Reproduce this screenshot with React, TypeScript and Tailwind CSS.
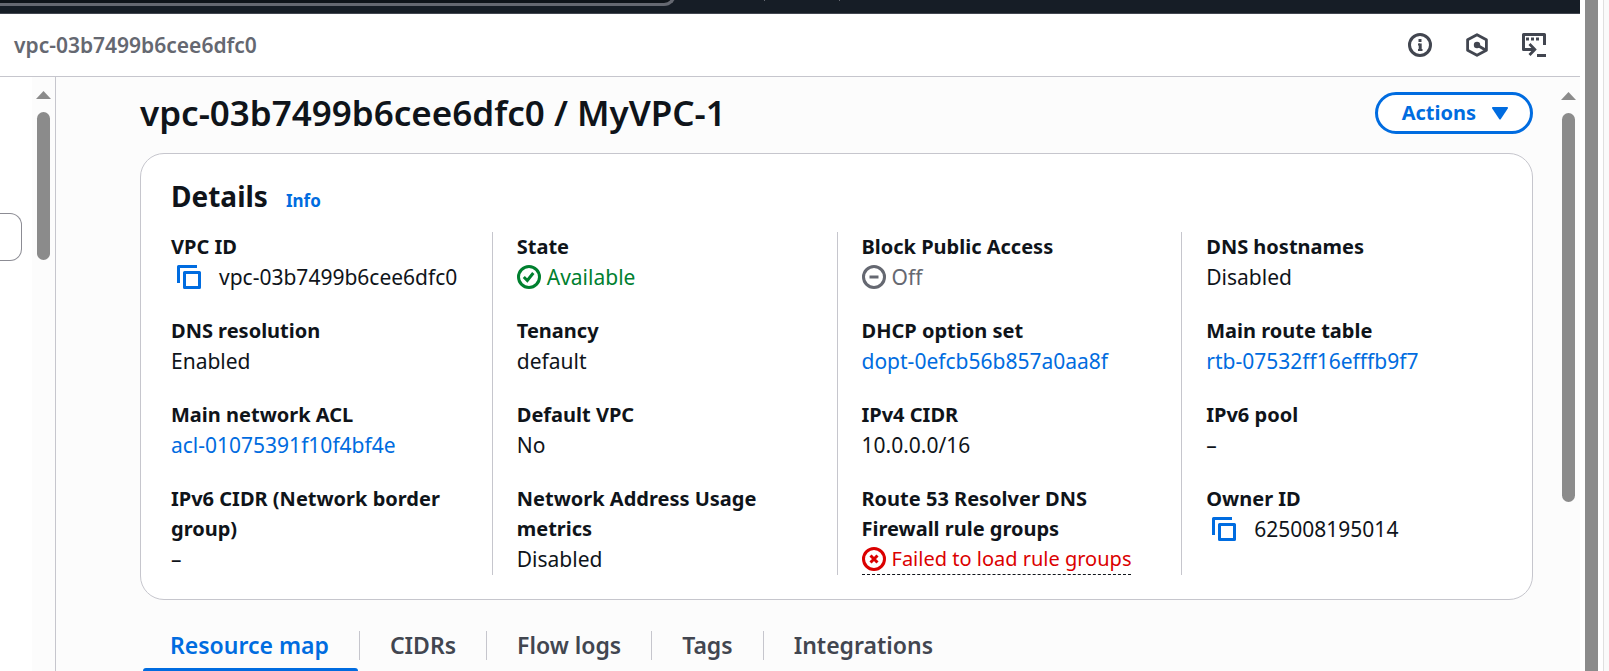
import type { ReactNode } from "react";

function InfoIcon() {
  return (
    <svg viewBox="0 0 24 24" className="size-6" fill="none" stroke="#424650" strokeWidth="3" aria-hidden="true">
      <circle cx="12" cy="12" r="10.500" />
      <path d="M12 6v3" />
      <path d="M12.200 10.500V18" />
      <path d="M10 11.500h2M10 17h4.500" strokeWidth="2" />
    </svg>
  );
}

function HexIcon() {
  return (
    <svg viewBox="0 0 24 24" className="size-6" fill="none" stroke="#424650" strokeWidth="2.800" aria-hidden="true">
      <path d="M21.400 17.300V6.800L12 1.700L2.600 6.800v10.500L12 22.300z" strokeLinejoin="round" />
      <path d="M12 12l8.500 5" />
      <circle cx="12" cy="12" r="3.200" fill="#424650" stroke="none" />
    </svg>
  );
}

function ShellIcon() {
  return (
    <svg viewBox="0 0 24 24" className="size-6" fill="none" stroke="#424650" strokeWidth="3" aria-hidden="true">
      <path d="M22.500 12V1.500H1.500v15H12" strokeLinejoin="round" />
      <path d="M7.500 11l5.300 5.500-5.300 5.500" strokeWidth="2.800" />
      <path d="M15 22.500h9" />
      <path d="M4 6h3M9 6h3M14 6h3" />
    </svg>
  );
}

function CopyIcon() {
  return (
    <svg viewBox="0 0 24 24" className="size-6" fill="none" stroke="#006ce0" strokeWidth="3" strokeLinejoin="round" aria-hidden="true">
      <path d="M1.500 18V1.500H20" />
      <path d="M7.500 7.500h15v15h-15z" />
    </svg>
  );
}

function StatusIcon({ kind }: { kind: "ok" | "off" | "error" }) {
  return (
    <svg viewBox="0 0 24 24" className="size-6 shrink-0" fill="none" stroke="currentColor" strokeWidth="3" aria-hidden="true">
      <circle cx="12" cy="12" r="10.500" />
      {kind === "ok" && <path d="M6.800 12l3.500 3.500 6-7.500" />}
      {kind === "off" && <path d="M7.500 12h9" />}
      {kind === "error" && <path d="M8.500 8.500l7 7M15.500 8.500l-7 7" />}
    </svg>
  );
}

function UpArrow() {
  return (
    <svg viewBox="0 0 15 8" className="h-2 w-[15px]" fill="#8b8b8b" aria-hidden="true">
      <path d="M7.500 0L15 8H0z" />
    </svg>
  );
}

function Field({ label, children }: { label: string; children: ReactNode }) {
  return (
    <div>
      <dt className="text-[20px] leading-[30px] font-bold">{label}</dt>
      <dd>{children}</dd>
    </div>
  );
}

function Copyable({ text }: { text: string }) {
  return (
    <span className="flex items-center gap-[18px] pl-1.5">
      <button type="button" aria-label="Copy">
        <CopyIcon />
      </button>
      {text}
    </span>
  );
}

function Column({ first = false, children }: { first?: boolean; children: ReactNode }) {
  return (
    <dl className={`flex flex-col gap-6 px-6 ${first ? "" : "border-l border-[#c6c6cd]"}`}>
      {children}
    </dl>
  );
}

function ResourceLink({ children }: { children: ReactNode }) {
  return (
    <a href="#" className="text-[#006ce0]">
      {children}
    </a>
  );
}

const tabs = ["Resource map", "CIDRs", "Flow logs", "Tags", "Integrations"];

export default function App() {
  return (
    <div className="flex h-screen overflow-hidden bg-white font-['Noto_Sans',sans-serif] text-[21px] leading-[30px] text-[#0f141a]">
      <div className="flex min-w-0 flex-1 flex-col">
        <div className="flex h-[14px] shrink-0 items-start border-b border-[#424650] bg-[#161d26]">
          <div className="flex h-1.5 w-[43%] max-w-[676px] items-end overflow-hidden">
            <div className="h-8 flex-1 rounded-br-[12px] border-r-[3px] border-b-[3px] border-[#656871] bg-[#0f141a]" />
          </div>
          <div className="ml-22 h-px w-px bg-[#656871]" />
          <div className="ml-[74px] h-px w-px bg-[#656871]" />
        </div>

        <header className="flex h-[63px] shrink-0 items-center justify-between border-b border-[#c6c6cd] pr-[34px] pl-[14px]">
          <span className="font-semibold text-[#656871]">vpc-03b7499b6cee6dfc0</span>
          <div className="flex gap-[33px]">
            <button type="button" aria-label="Info">
              <InfoIcon />
            </button>
            <button type="button" aria-label="Amazon Q">
              <HexIcon />
            </button>
            <button type="button" aria-label="CloudShell">
              <ShellIcon />
            </button>
          </div>
        </header>

        <div className="flex min-h-0 flex-1">
          <aside className="flex w-14 shrink-0 border-r border-[#c6c6cd]">
            <div className="flex-1 pt-34">
              <input
                aria-label="Filter"
                className="block h-12 w-[22px] rounded-r-[12px] border border-l-0 border-[#8c8c94] bg-white"
              />
            </div>
            <div className="flex w-[23px] flex-col items-center gap-[13px] bg-[#fcfcfc] pt-[14px]">
              <UpArrow />
              <div className="h-[148px] w-[13px] rounded-full bg-[#8b8b8b]" />
            </div>
          </aside>

          <main className="min-w-0 flex-1 overflow-hidden bg-[#fcfcfc] pt-[15px] pr-[23px] pl-[84px]">
            <div className="flex items-center justify-between">
              <h1 className="text-[35px] leading-[42px] font-semibold">vpc-03b7499b6cee6dfc0 / MyVPC-1</h1>
              <button
                type="button"
                className="flex h-[42px] items-center gap-4 rounded-full border-[3px] border-[#006ce0] bg-white pr-[22px] pl-6 text-[20px] font-bold text-[#006ce0]"
              >
                Actions
                <svg viewBox="0 0 16 13" className="h-[13px] w-4" fill="#006ce0" aria-hidden="true">
                  <path d="M1 0h14q1.500 0 .8 1.500L8.500 12.500h-1L.2 1.500Q-.5 0 1 0z" />
                </svg>
              </button>
            </div>

            <section className="mt-[19px] rounded-[24px] border border-[#c6c6cd] bg-white px-1.5 py-6">
              <div className="flex items-baseline gap-[18px] px-6">
                <h2 className="text-[28px] leading-9 font-bold">Details</h2>
                <a href="#" className="text-[17px] leading-6 font-bold text-[#006ce0]">
                  Info
                </a>
              </div>
              <div className="mt-[18px] grid grid-cols-4">
                <Column first>
                  <Field label="VPC ID">
                    <Copyable text="vpc-03b7499b6cee6dfc0" />
                  </Field>
                  <Field label="DNS resolution">Enabled</Field>
                  <Field label="Main network ACL">
                    <ResourceLink>acl-01075391f10f4bf4e</ResourceLink>
                  </Field>
                  <Field label="IPv6 CIDR (Network border group)">–</Field>
                </Column>
                <Column>
                  <Field label="State">
                    <span className="flex items-center gap-1.5 text-[#00802f]">
                      <StatusIcon kind="ok" />
                      Available
                    </span>
                  </Field>
                  <Field label="Tenancy">default</Field>
                  <Field label="Default VPC">No</Field>
                  <Field label="Network Address Usage metrics">Disabled</Field>
                </Column>
                <Column>
                  <Field label="Block Public Access">
                    <span className="flex items-center gap-1.5 text-[#656871]">
                      <StatusIcon kind="off" />
                      Off
                    </span>
                  </Field>
                  <Field label="DHCP option set">
                    <ResourceLink>dopt-0efcb56b857a0aa8f</ResourceLink>
                  </Field>
                  <Field label="IPv4 CIDR">10.0.0.0/16</Field>
                  <Field label="Route 53 Resolver DNS Firewall rule groups">
                    <button
                      type="button"
                      className="flex h-[31px] items-center gap-1.5 border-b border-dashed border-[#0f141a] text-[20px] whitespace-nowrap text-[#db0000]"
                    >
                      <StatusIcon kind="error" />
                      Failed to load rule groups
                    </button>
                  </Field>
                </Column>
                <Column>
                  <Field label="DNS hostnames">Disabled</Field>
                  <Field label="Main route table">
                    <ResourceLink>rtb-07532ff16efffb9f7</ResourceLink>
                  </Field>
                  <Field label="IPv6 pool">–</Field>
                  <Field label="Owner ID">
                    <Copyable text="625008195014" />
                  </Field>
                </Column>
              </div>
            </section>

            <div role="tablist" className="mt-[31px] flex text-[23px]">
              {tabs.map((tab, i) => (
                <div key={tab} className="flex flex-col">
                  <button
                    type="button"
                    role="tab"
                    aria-selected={i === 0}
                    className={`h-[29px] px-[30px] leading-[29px] font-semibold ${
                      i === 0 ? "text-[#006ce0]" : "text-[#424650]"
                    } ${i < tabs.length - 1 ? "border-r border-[#c6c6cd]" : ""}`}
                  >
                    {tab}
                  </button>
                  {i === 0 && <div className="mr-0.5 ml-[3px] mt-2 h-1.5 rounded-t-[3px] bg-[#006ce0]" />}
                </div>
              ))}
            </div>
          </main>

          <div className="flex w-6 shrink-0 flex-col items-center gap-[13px] bg-[#fcfcfc] pt-[15px]">
            <UpArrow />
            <div className="h-[389px] w-[13px] rounded-full bg-[#8b8b8b]" />
          </div>
        </div>
      </div>

      <div className="flex w-[29px] shrink-0 pl-[5px]">
        <div className="w-[13px] bg-[#8b8b8b]" />
        <div className="ml-[5px] flex-1 border-l border-[#e0e0e0] bg-[#fafafa]" />
      </div>
    </div>
  );
}
